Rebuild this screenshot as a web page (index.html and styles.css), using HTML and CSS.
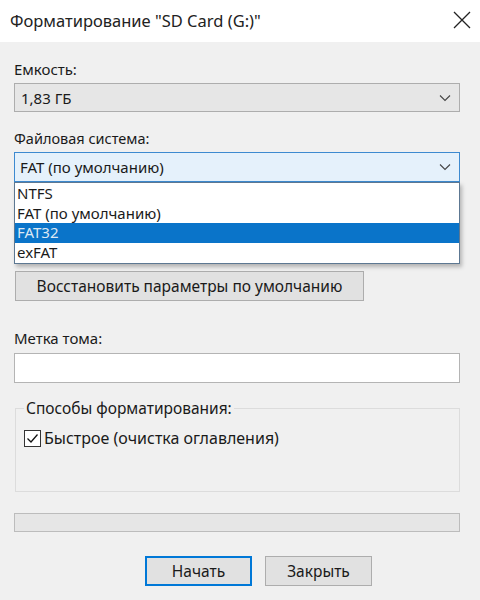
FILE: index.html
```html
<!DOCTYPE html>
<html lang="ru">
<head>
    <meta charset="UTF-8">
    <title>Форматирование</title>
    <link rel="stylesheet" href="styles.css">
</head>
<body>
    <div class="window">
        <div class="titlebar">
            <span class="title">Форматирование "SD Card (G:)"</span>
            <svg class="close" width="20" height="20" viewBox="0 0 20 20">
                <path d="M2 2 L18 18 M18 2 L2 18" stroke="#222" stroke-width="1.3" fill="none"/>
            </svg>
        </div>

        <div class="content">
            <div class="label label-first">Емкость:</div>
            <div class="combo combo-grey">
                <span>1,83 ГБ</span>
                <svg class="chevron" width="12" height="8" viewBox="0 0 12 8"><path d="M1 1.5 L6 6.5 L11 1.5" stroke="#444" stroke-width="1.1" fill="none"/></svg>
            </div>

            <div class="label label-fs">Файловая система:</div>
            <div class="combo-wrap">
                <div class="combo combo-open">
                    <span>FAT (по умолчанию)</span>
                    <svg class="chevron" width="12" height="8" viewBox="0 0 12 8"><path d="M1 1.5 L6 6.5 L11 1.5" stroke="#444" stroke-width="1.1" fill="none"/></svg>
                </div>
                <ul class="dropdown">
                    <li>NTFS</li>
                    <li>FAT (по умолчанию)</li>
                    <li class="selected">FAT32</li>
                    <li>exFAT</li>
                </ul>
            </div>

            <button class="btn btn-restore">Восстановить параметры по умолчанию</button>

            <div class="label label-volume">Метка тома:</div>
            <div class="input"></div>

            <fieldset class="group">
                <legend>Способы форматирования:</legend>
                <label class="check">
                    <span class="box">
                        <svg width="15" height="15" viewBox="0 0 15 15"><path d="M2.5 7.5 L6 11 L12.5 3.5" stroke="#111" stroke-width="1.3" fill="none"/></svg>
                    </span>
                    Быстрое (очистка оглавления)
                </label>
            </fieldset>

            <div class="progress"></div>

            <div class="actions">
                <button class="btn btn-default">Начать</button>
                <button class="btn">Закрыть</button>
            </div>
        </div>
    </div>
</body>
</html>
```

FILE: styles.css
```css
body {
    margin: 0;
    font-family: "Noto Sans", "Open Sans", sans-serif;
    font-size: 15px;
    color: #1a1a1a;
    background: #f0f0f0;
}

.window {
    width: 480px;
    height: 600px;
    background: #f0f0f0;
}

.titlebar {
    height: 42px;
    background: #fff;
    display: flex;
    align-items: center;
    justify-content: space-between;
    padding: 0 8px 0 10px;
}

.title {
    font-size: 16.5px;
    color: #222;
    margin-top: -2px;
}

.close {
    margin-top: -2px;
}

.content {
    padding: 0 20px 0 14px;
}

.label {
    line-height: 20px;
    margin-top: 16px;
    margin-bottom: 4px;
}

.label-first {
    padding-top: 17px;
    margin-top: 0;
}

.label-fs {
    font-size: 14.5px;
}

.combo {
    height: 29px;
    box-sizing: border-box;
    border: 1px solid #adadad;
    display: flex;
    align-items: center;
    justify-content: space-between;
    padding: 0 8px 0 6px;
}

.combo-grey {
    background: #e6e6e6;
}

.combo-wrap {
    position: relative;
}

.combo-open {
    height: 30px;
    background: #e5f1fb;
    border-color: #3d8ad0;
    padding-left: 5px;
}

.dropdown {
    position: absolute;
    left: 0;
    right: 0;
    top: 30px;
    margin: 0;
    padding: 1px 0;
    list-style: none;
    background: #fff;
    border: 1px solid #5d7892;
    box-shadow: 2px 3px 4px rgba(0, 0, 0, 0.25);
    z-index: 2;
}

.dropdown li {
    height: 19.5px;
    line-height: 19.5px;
    padding-left: 2px;
    font-size: 15px;
}

.dropdown .selected {
    background: #0a74c9;
    color: #dce8f4;
}

.btn {
    font-family: inherit;
    font-size: 15.5px;
    color: #1a1a1a;
    background: #e1e1e1;
    border: 1px solid #adadad;
    height: 30px;
    padding: 0;
}

.btn-restore {
    display: block;
    width: 349px;
    margin: 89px 0 0 1px;
}

.label-volume {
    margin-top: 27px;
    margin-bottom: 5px;
}

.input {
    height: 30px;
    box-sizing: border-box;
    background: #fff;
    border: 1px solid #b4b4b4;
}

.group {
    margin: 15px 0 0 1px;
    padding: 9px 8px 0;
    height: 94px;
    box-sizing: border-box;
    border: 1px solid #dcdcdc;
}

.group legend {
    padding: 0 2px;
    margin-left: 0;
    line-height: 20px;
    font-size: 15.5px;
}

.check {
    display: flex;
    align-items: center;
    gap: 3px;
    font-size: 16px;
}

.box {
    width: 17px;
    height: 17px;
    box-sizing: border-box;
    border: 1px solid #333;
    background: #fff;
    display: flex;
    align-items: center;
    justify-content: center;
}

.progress {
    margin-top: 21px;
    height: 19px;
    box-sizing: border-box;
    background: #e6e6e6;
    border: 1px solid #bcbcbc;
}

.actions {
    display: flex;
    gap: 13px;
    margin: 24px 0 0 131px;
}

.actions .btn {
    width: 107px;
    height: 30px;
}

.btn-default {
    border: 2px solid #0078d7;
}
```
